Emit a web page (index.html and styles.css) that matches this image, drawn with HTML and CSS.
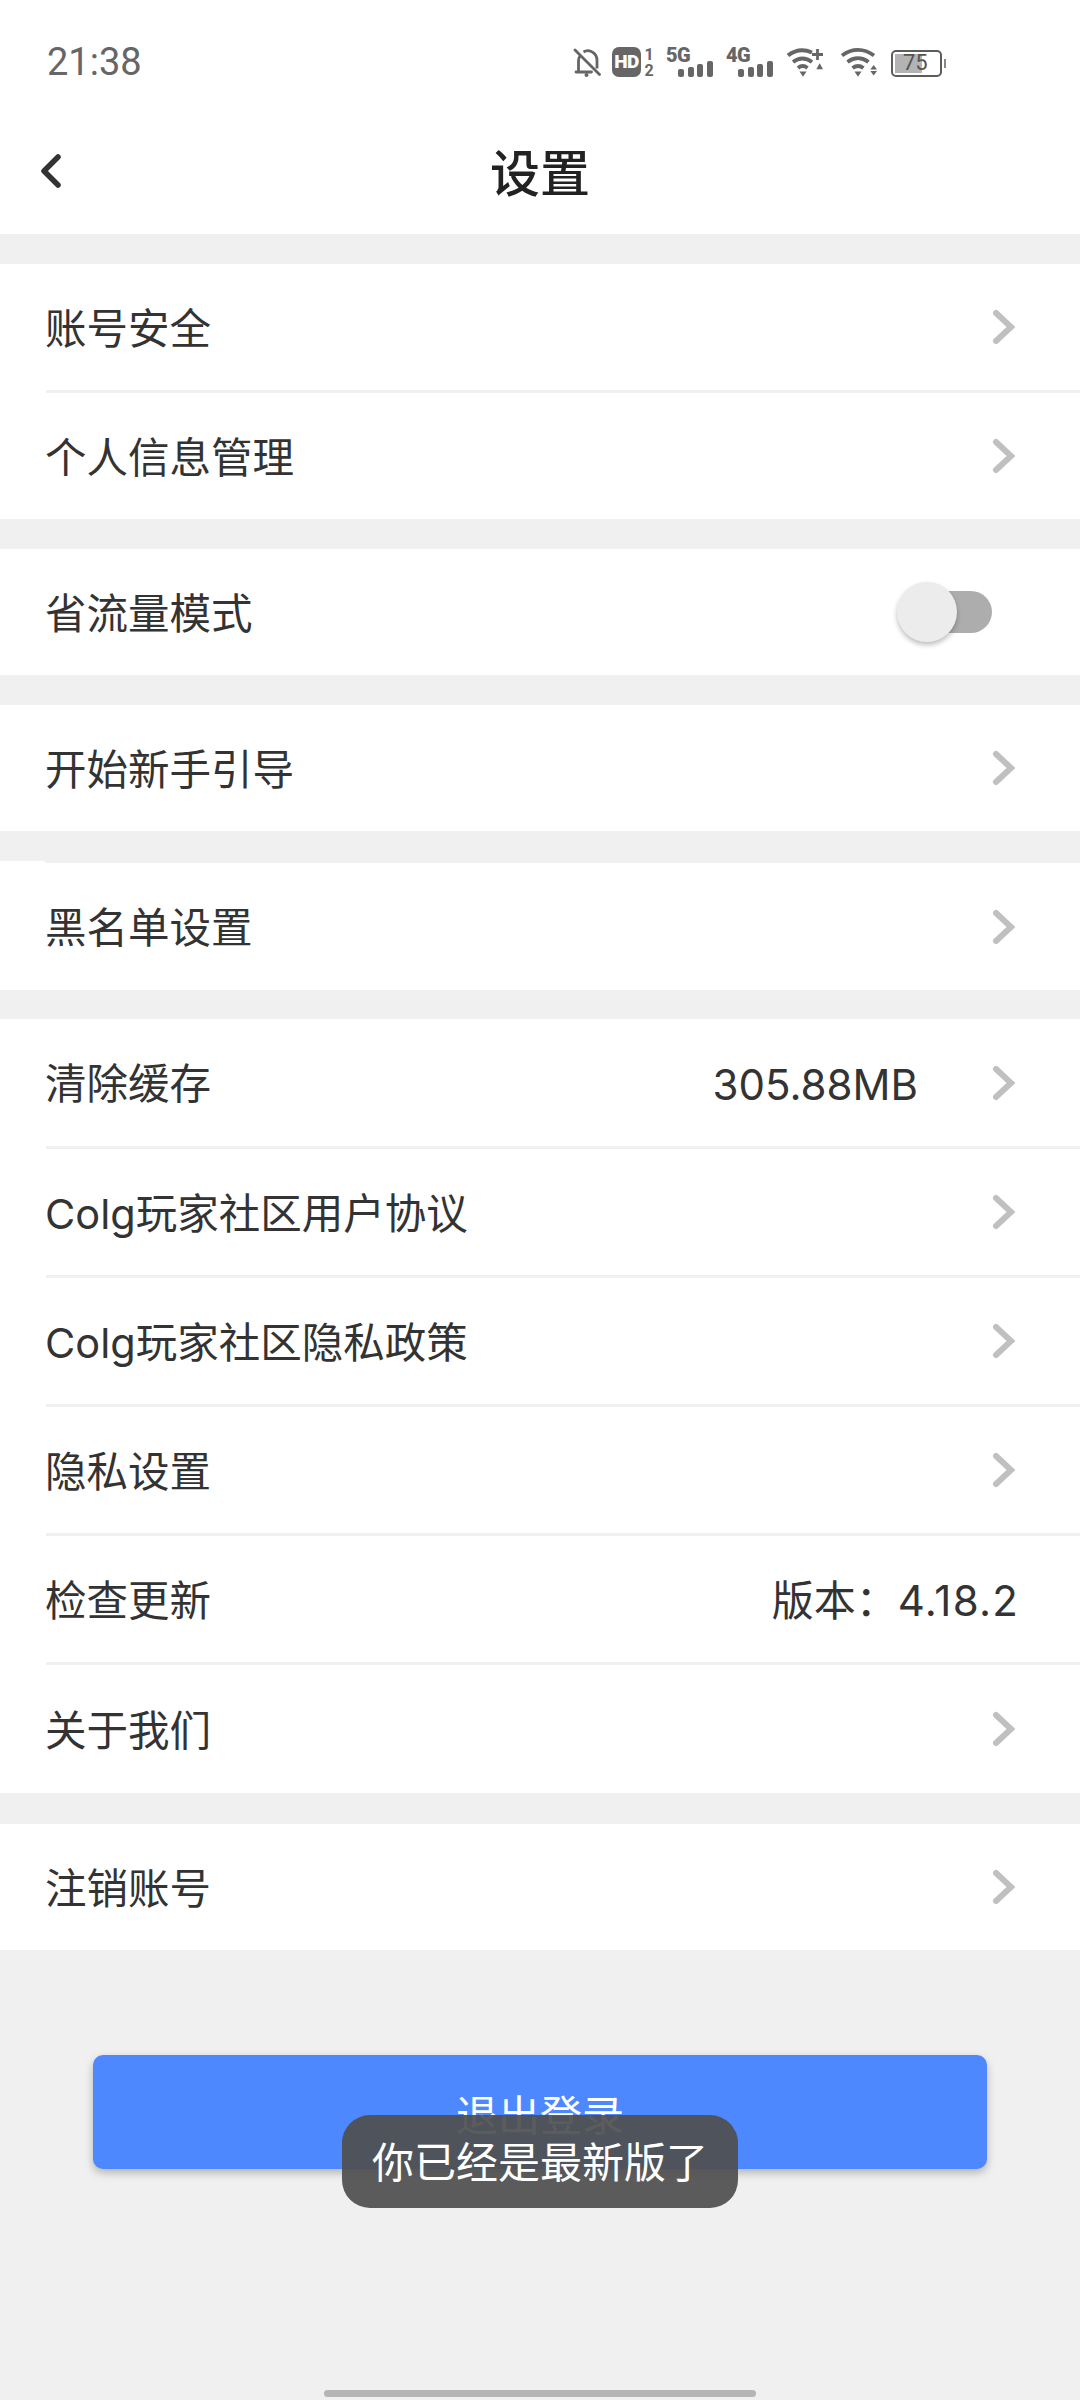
FILE: index.html
```html
<!DOCTYPE html>
<html>
<head>
    <title>设置</title>
    <link rel="stylesheet" href="styles.css">
</head>
<body>
    <div id="app">
        <div class="status-bar">
            <span class="clock">21:38</span>
            <div class="status-icons">
                <svg class="ico" width="28" height="30" viewBox="0 0 28 30">
                    <path d="M5.500 24V14c0-2 .5-3.500 1.500-5M10.500 5c3-2 7-1.500 9.500.5 3 2 4 5 4 8v8" fill="none" stroke="#666" stroke-width="2.800"/>
                    <path d="M3 25h15.500M2 3l24.500 24.500" fill="none" stroke="#666" stroke-width="2.800" stroke-linecap="round"/>
                    <circle cx="13.500" cy="28" r="2" fill="#666"/>
                </svg>
                <span class="hd">HD</span>
                <span class="sim-nums"><span>1</span><span>2</span></span>
                <div class="signal"><span class="net">5G</span><div class="bars"><i class="b1"></i><i class="b2"></i><i class="b3"></i><i class="b4"></i></div></div>
                <div class="signal"><span class="net">4G</span><div class="bars"><i class="b1"></i><i class="b2"></i><i class="b3"></i><i class="b4"></i></div></div>
                <svg class="ico wifi" width="36" height="30" viewBox="0 0 36 30">
                    <path d="M1 8.500C8 3 17 2 25 5.500M6 15c6-4.500 13-4.500 19 0M11 21c3-2.500 6.500-2.500 9.500 0" fill="none" stroke="#666" stroke-width="3.800"/>
                    <path d="M12.500 24.500h7L16 29.700z" fill="#666"/>
                    <path d="M30.500 2v11M25 7.500h11" stroke="#666" stroke-width="2.800"/>
                    <path d="M32.700 16.300l3.300 6h-6.700z" fill="#666"/>
                </svg>
                <svg class="ico wifi" width="36" height="30" viewBox="0 0 36 30">
                    <path d="M1 8.500c10-7.500 22-7.500 32 0M6.500 15c6.500-5 14.500-5 21 0M11.500 21c3.500-2.500 7.500-2.500 11 0" fill="none" stroke="#666" stroke-width="3.800"/>
                    <path d="M13.500 24.500h7L17 29.700z" fill="#666"/>
                    <path d="M32.700 18l3.300 4.500h-6.700zM32.700 28.500L36 24h-6.700z" fill="#666"/>
                </svg>
                <div class="battery"><div class="battery-fill"></div><span class="battery-num">75</span></div>
            </div>
        </div>

        <div class="topbar">
            <svg class="back" width="22" height="34" viewBox="0 0 22 34">
                <path d="M18 3L4 17l14 14" fill="none" stroke="#333" stroke-width="5.500" stroke-linecap="round" stroke-linejoin="round"/>
            </svg>
            <h1>设置</h1>
        </div>

        <div class="group">
            <div class="row"><span>账号安全</span><svg class="arrow"><use href="#chev"/></svg></div>
            <div class="row"><span>个人信息管理</span><svg class="arrow"><use href="#chev"/></svg></div>
        </div>

        <div class="group">
            <div class="row">
                <span>省流量模式</span>
                <div class="switch"><div class="knob"></div></div>
            </div>
        </div>

        <div class="group">
            <div class="row"><span>开始新手引导</span><svg class="arrow"><use href="#chev"/></svg></div>
        </div>

        <div class="group notch">
            <div class="row tall"><span>黑名单设置</span><svg class="arrow"><use href="#chev"/></svg></div>
        </div>

        <div class="group main-list">
            <div class="row tall"><span>清除缓存</span><span class="value with-arrow">305.88MB</span><svg class="arrow"><use href="#chev"/></svg></div>
            <div class="row"><span>Colg玩家社区用户协议</span><svg class="arrow"><use href="#chev"/></svg></div>
            <div class="row"><span>Colg玩家社区隐私政策</span><svg class="arrow"><use href="#chev"/></svg></div>
            <div class="row"><span>隐私设置</span><svg class="arrow"><use href="#chev"/></svg></div>
            <div class="row"><span>检查更新</span><span class="value version">版本：<span class="num">4.18.2</span></span></div>
            <div class="row last"><span>关于我们</span><svg class="arrow"><use href="#chev"/></svg></div>
        </div>

        <div class="group cancel">
            <div class="row"><span>注销账号</span><svg class="arrow"><use href="#chev"/></svg></div>
        </div>

        <div class="logout-wrap">
            <button class="logout">退出登录</button>
        </div>

        <div class="toast">你已经是最新版了</div>
        <div class="home-bar"></div>
    </div>

    <svg width="0" height="0" class="defs">
        <symbol id="chev" viewBox="0 0 24 36">
            <path d="M4 4l15 14L4 32" fill="none" stroke="#c0c0c0" stroke-width="6" stroke-linecap="round" stroke-linejoin="miter"/>
        </symbol>
    </svg>
</body>
</html>
```

FILE: styles.css
```css
* {
    box-sizing: border-box;
}
body {
    margin: 0;
    background-color: #f0f0f0;
    font-family: Inter, "Noto Sans CJK SC", sans-serif;
    color: #333;
}
#app {
    position: relative;
    width: 1080px;
    height: 2400px;
    overflow: hidden;
}
.defs {
    position: absolute;
}

/* status bar */
.status-bar {
    height: 117px;
    background-color: #fff;
    padding: 44px 138px 0 47px;
    display: flex;
    justify-content: space-between;
    align-items: flex-start;
}
.clock {
    font-family: Roboto, sans-serif;
    font-size: 38px;
    line-height: 36px;
    color: #666;
}
.status-icons {
    display: flex;
    align-items: flex-start;
    margin-top: 3px;
    color: #666;
}
.ico {
    display: block;
}
.hd {
    width: 29px;
    height: 30px;
    margin-left: 11px;
    background-color: #666;
    color: #fff;
    border-radius: 7px;
    font-family: Roboto, sans-serif;
    font-weight: 900;
    font-size: 19px;
    letter-spacing: -0.5px;
    line-height: 30px;
    text-align: center;
}
.sim-nums {
    display: flex;
    flex-direction: column;
    margin-left: 3px;
    width: 10px;
    font-family: Roboto, sans-serif;
    font-weight: 700;
    font-size: 16px;
    line-height: 16px;
    text-align: center;
}
.signal {
    position: relative;
    width: 47px;
    height: 30px;
    margin-left: 12px;
}
.net {
    position: absolute;
    left: 0;
    top: 0;
    font-family: Roboto, sans-serif;
    font-weight: 900;
    font-size: 20px;
    letter-spacing: -0.5px;
    line-height: 17px;
}
.signal + .signal {
    margin-left: 13px;
}
.bars {
    position: absolute;
    right: 0;
    bottom: 0;
    display: flex;
    align-items: flex-end;
    gap: 3.700px;
}
.bars i {
    display: block;
    width: 6px;
    background-color: #666;
    border-radius: 2px;
}
.bars .b1 { height: 8px; }
.bars .b2 { height: 10px; }
.bars .b3 { height: 13px; }
.bars .b4 { height: 16px; }
.signal + .wifi {
    margin-left: 14px;
}
.wifi + .wifi {
    margin-left: 18px;
}
.battery {
    position: relative;
    width: 51px;
    height: 27px;
    margin-left: 14px;
    margin-top: 3px;
    border: 2.500px solid #5c5c5c;
    border-radius: 5px;
}
.battery::after {
    content: "";
    position: absolute;
    right: -6px;
    top: 7px;
    width: 2px;
    height: 9px;
    background-color: #888;
}
.battery-fill {
    position: absolute;
    left: 2px;
    top: 2px;
    bottom: 2px;
    width: 27px;
    background-color: #b3b3b3;
}
.battery-num {
    position: absolute;
    left: 10px;
    top: 0;
    font-family: Roboto, sans-serif;
    font-size: 22px;
    line-height: 22px;
    color: #555;
}

/* title bar */
.topbar {
    position: relative;
    height: 117px;
    background-color: #fff;
    display: flex;
    justify-content: center;
    align-items: center;
}
.topbar h1 {
    margin: 0 0 12px 0;
    font-size: 50px;
    font-weight: 500;
    color: #222;
}
.back {
    position: absolute;
    left: 40px;
    top: 37px;
}

/* list */
.group {
    position: relative;
    margin-top: 30px;
    background-color: #fff;
}
.group.notch {
    margin-top: 32px;
}
.group.notch::before {
    content: "";
    position: absolute;
    left: 0;
    top: -2px;
    width: 45px;
    height: 2px;
    background-color: #fff;
}
.group.main-list {
    margin-top: 29px;
}
.group.cancel {
    margin-top: 31px;
}
.row {
    height: 126px;
    margin-left: 46px;
    padding-right: 41px;
    display: flex;
    align-items: center;
    font-size: 41.500px;
    color: #333;
}
.row + .row {
    height: 129px;
    border-top: 3px solid #f0f0f0;
}
.row.tall {
    height: 127px;
}
.row.last {
    height: 131px;
}
.row > span {
    margin-bottom: 3px;
}
.row > span:first-child {
    flex: 1;
    margin-left: -1px;
}
.value {
    font-size: 42px;
}
.value.with-arrow {
    margin-top: 3px;
    margin-bottom: 0;
    margin-right: 74px;
}
.value.version {
    margin-right: 20px;
}
.num {
    letter-spacing: 1.200px;
}
.arrow {
    width: 24px;
    height: 36px;
    margin-right: 23px;
}

/* toggle */
.switch {
    position: relative;
    width: 86px;
    height: 42px;
    margin-right: 47px;
    background-color: #adadad;
    border-radius: 21px;
}
.knob {
    position: absolute;
    left: -9px;
    top: -9px;
    width: 60px;
    height: 60px;
    border-radius: 50%;
    background-color: #ececec;
    box-shadow: 0 3px 5px rgba(0, 0, 0, 0.25);
}

/* logout */
.logout-wrap {
    padding: 105px 93px 0;
}
.logout {
    display: block;
    width: 100%;
    height: 114px;
    border: none;
    border-radius: 10px;
    background-color: #4d88ff;
    color: #fff;
    font-family: inherit;
    font-size: 42px;
    box-shadow: 0 4px 8px rgba(0, 0, 0, 0.25);
}

/* toast */
.toast {
    position: absolute;
    left: 342px;
    top: 2115px;
    width: 396px;
    height: 93px;
    border-radius: 28px;
    background-color: rgba(78, 78, 78, 0.92);
    color: #fff;
    font-size: 42px;
    line-height: 95px;
    text-align: center;
}
.home-bar {
    position: absolute;
    left: 324px;
    top: 2390px;
    width: 432px;
    height: 7px;
    border-radius: 4px;
    background-color: #b5b5b5;
}
```
